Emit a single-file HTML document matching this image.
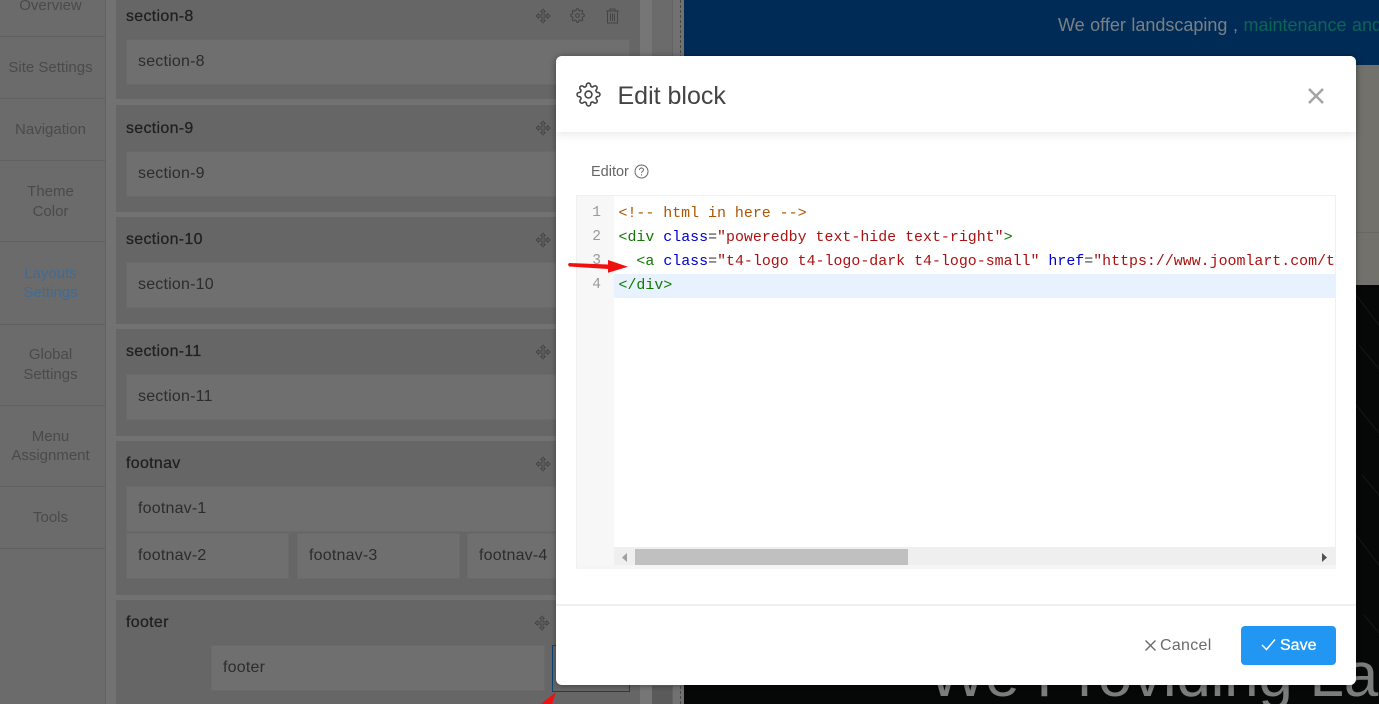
<!DOCTYPE html>
<html><head><meta charset="utf-8"><title>Edit block</title>
<style>
html,body{margin:0;padding:0;width:1379px;height:704px;overflow:hidden;background:#727272}
*{box-sizing:border-box}
body{font-family:"Liberation Sans",sans-serif;position:relative}
.a{position:absolute}
.nav{position:absolute;left:0;width:105px;border-bottom:1px solid #616161;color:#4a4a4a;font-size:15px;line-height:20px;text-align:center}
.nav span{position:absolute;left:0;width:101px}
.sec{position:absolute;left:116px;width:524px;background:#666}
.t{position:absolute;left:126px;color:#202020;font-size:16px;line-height:20px;letter-spacing:.3px;-webkit-text-stroke:.25px #202020}
.b{position:absolute;background:#6f6f6f;border:1px solid #6a6a6a;color:#2c2c2c;font-size:16px;line-height:44px;padding-left:11px;letter-spacing:.2px;height:46px}
.code{position:absolute;left:618px;font:14.93px/24px "Liberation Mono",monospace;white-space:pre;color:#222}
.n{position:absolute;left:577px;width:24px;text-align:right;font:14.5px/24px "Liberation Mono",monospace;color:#999}
.tg{color:#170}.at{color:#00c}.st{color:#a11}.cm{color:#a50}.eq{color:#444}
</style></head><body>

<!-- right page -->
<div class="a" style="left:684px;top:0;width:695px;height:65px;background:#002b56"></div>
<div class="a" style="left:684px;top:65px;width:695px;height:220px;background:#72716c"></div>
<div class="a" style="left:684px;top:232px;width:695px;height:1px;background:#686762"></div>
<div class="a" style="left:684px;top:285px;width:695px;height:419px;background:#060808;overflow:hidden">
<svg width="695" height="419" style="position:absolute;left:0;top:0"><g stroke="#161818" stroke-width="1"><path d="M672 10l23 30M675 60l20 24M672 120l23 28M678 190l17 20M672 250l23 30M680 330l15 18"/></g></svg>
<div class="a" style="left:244px;top:356px;font-size:62px;line-height:70px;color:#7c7c7c;white-space:nowrap;letter-spacing:-.25px">We Providing Lan</div>
</div>
<div class="a" style="left:1058px;top:13px;font-size:18px;line-height:24px;color:#7a8185;white-space:nowrap;word-spacing:.5px"><span>We offer landscaping ,</span> <span style="color:#0a6555">maintenance and</span></div>

<!-- strips -->
<div class="a" style="left:640px;top:0;width:12px;height:704px;background:#767676"></div>
<div class="a" style="left:652px;top:0;width:20px;height:704px;background:#6b6b6b"></div>
<div class="a" style="left:652px;top:686px;width:20px;height:18px;background:#5a5a5a"></div>
<div class="a" style="left:672px;top:0;width:1px;height:704px;background:#636363"></div>
<div class="a" style="left:673px;top:0;width:11px;height:704px;background:#717171"></div>
<div class="a" style="left:680px;top:0;width:0;height:704px;border-left:1px dashed #484848"></div>

<!-- sidebar -->
<div class="a" style="left:0;top:0;width:106px;height:704px;background:#6b6b6b;border-right:1px solid #616161"></div>
<div class="nav" style="top:-20px;height:57px"><span style="top:16px">Overview</span></div>
<div class="nav" style="top:37px;height:62px"><span style="top:21px">Site Settings</span></div>
<div class="nav" style="top:99px;height:62px"><span style="top:21px">Navigation</span></div>
<div class="nav" style="top:161px;height:81px"><span style="top:21px">Theme<br>Color</span></div>
<div class="nav" style="top:242px;height:83px;color:#416b93;line-height:19px"><span style="top:22px">Layouts<br>Settings</span></div>
<div class="nav" style="top:325px;height:81px"><span style="top:20px">Global<br>Settings</span></div>
<div class="nav" style="top:406px;height:81px;line-height:19px"><span style="top:21px">Menu<br>Assignment</span></div>
<div class="nav" style="top:487px;height:62px"><span style="top:21px">Tools</span></div>

<!-- sections -->
<div class="sec" style="top:-10px;height:109px"></div>
<div class="sec" style="top:105px;height:107px"></div>
<div class="sec" style="top:217px;height:107px"></div>
<div class="sec" style="top:329px;height:107px"></div>
<div class="sec" style="top:441px;height:154px"></div>
<div class="sec" style="top:600px;height:104px"></div>

<div class="t" style="top:7px">section-8</div>
<div class="t" style="top:119px">section-9</div>
<div class="t" style="top:230px">section-10</div>
<div class="t" style="top:342px">section-11</div>
<div class="t" style="top:454px">footnav</div>
<div class="t" style="top:613px">footer</div>

<div class="b" style="left:126px;top:39px;width:504px">section-8</div>
<div class="b" style="left:126px;top:151px;width:504px">section-9</div>
<div class="b" style="left:126px;top:262px;width:504px">section-10</div>
<div class="b" style="left:126px;top:374px;width:504px">section-11</div>
<div class="b" style="left:126px;top:486px;width:504px">footnav-1</div>
<div class="b" style="left:126px;top:533px;width:163px">footnav-2</div>
<div class="b" style="left:297px;top:533px;width:163px">footnav-3</div>
<div class="b" style="left:467px;top:533px;width:163px">footnav-4</div>
<div class="b" style="left:211px;top:645px;width:334px">footer</div>
<div class="a" style="left:552px;top:645px;width:78px;height:47px;border:1px solid #0c4476"></div>

<!-- move icons -->
<svg class="a" style="left:535px;top:8px" width="16" height="16" viewBox="0 0 16 16" fill="none" stroke="#444" stroke-width=".9"><path d="M8 1l2.200 2.500H9V7h3.500V5.800L15 8l-2.500 2.200V9H9v3.500h1.200L8 15l-2.200-2.500H7V9H3.500v1.200L1 8l2.500-2.200V7H7V3.500H5.800z"/></svg>
<svg class="a" style="left:535px;top:120px" width="16" height="16" viewBox="0 0 16 16" fill="none" stroke="#444" stroke-width=".9"><path d="M8 1l2.200 2.500H9V7h3.500V5.800L15 8l-2.500 2.200V9H9v3.500h1.200L8 15l-2.200-2.500H7V9H3.500v1.200L1 8l2.500-2.200V7H7V3.500H5.800z"/></svg>
<svg class="a" style="left:535px;top:232px" width="16" height="16" viewBox="0 0 16 16" fill="none" stroke="#444" stroke-width=".9"><path d="M8 1l2.200 2.500H9V7h3.500V5.800L15 8l-2.500 2.200V9H9v3.500h1.200L8 15l-2.200-2.500H7V9H3.500v1.200L1 8l2.500-2.200V7H7V3.500H5.800z"/></svg>
<svg class="a" style="left:535px;top:344px" width="16" height="16" viewBox="0 0 16 16" fill="none" stroke="#444" stroke-width=".9"><path d="M8 1l2.200 2.500H9V7h3.500V5.800L15 8l-2.500 2.200V9H9v3.500h1.200L8 15l-2.200-2.500H7V9H3.500v1.200L1 8l2.500-2.200V7H7V3.500H5.800z"/></svg>
<svg class="a" style="left:535px;top:456px" width="16" height="16" viewBox="0 0 16 16" fill="none" stroke="#444" stroke-width=".9"><path d="M8 1l2.200 2.500H9V7h3.500V5.800L15 8l-2.500 2.200V9H9v3.500h1.200L8 15l-2.200-2.500H7V9H3.500v1.200L1 8l2.500-2.200V7H7V3.500H5.800z"/></svg>
<svg class="a" style="left:534px;top:615px" width="16" height="16" viewBox="0 0 16 16" fill="none" stroke="#444" stroke-width=".9"><path d="M8 1l2.200 2.500H9V7h3.500V5.800L15 8l-2.500 2.200V9H9v3.500h1.200L8 15l-2.200-2.500H7V9H3.500v1.200L1 8l2.500-2.200V7H7V3.500H5.800z"/></svg>

<svg class="a" style="left:570px;top:8px" width="15" height="15" viewBox="0 0 24 24" fill="none" stroke="#444" stroke-width="1.700"><circle cx="12" cy="12" r="3"/><path d="M19.4 15a1.65 1.65 0 0 0 .33 1.82l.06.06a2 2 0 0 1 0 2.83 2 2 0 0 1-2.83 0l-.06-.06a1.65 1.65 0 0 0-1.82-.33 1.65 1.65 0 0 0-1 1.51V21a2 2 0 0 1-2 2 2 2 0 0 1-2-2v-.09A1.65 1.65 0 0 0 9 19.4a1.65 1.65 0 0 0-1.82.33l-.06.06a2 2 0 0 1-2.83 0 2 2 0 0 1 0-2.83l.06-.06a1.65 1.65 0 0 0 .33-1.82 1.65 1.65 0 0 0-1.51-1H3a2 2 0 0 1-2-2 2 2 0 0 1 2-2h.09A1.65 1.65 0 0 0 4.600 9a1.65 1.65 0 0 0-.33-1.82l-.06-.06a2 2 0 0 1 0-2.83 2 2 0 0 1 2.83 0l.06.06a1.65 1.65 0 0 0 1.82.33H9a1.65 1.65 0 0 0 1-1.51V3a2 2 0 0 1 2-2 2 2 0 0 1 2 2v.09a1.65 1.65 0 0 0 1 1.51 1.65 1.65 0 0 0 1.82-.33l.06-.06a2 2 0 0 1 2.83 0 2 2 0 0 1 0 2.83l-.06.06a1.65 1.65 0 0 0-.33 1.82V9a1.65 1.65 0 0 0 1.51 1H21a2 2 0 0 1 2 2 2 2 0 0 1-2 2h-.09a1.65 1.65 0 0 0-1.51 1z"/></svg>
<svg class="a" style="left:605px;top:8px" width="15" height="16" viewBox="0 0 15 16" fill="none" stroke="#444"><path d="M1 3h13M5 3V1h5v2M2.500 3v12h10V3M5.500 5.500v7.500M7.500 5.500v7.500M9.500 5.500v7.500"/></svg>

<!-- modal -->
<div class="a" style="left:556px;top:56px;width:800px;height:629px;background:#fff;border-radius:6px;box-shadow:0 1px 6px rgba(0,0,0,.35)"></div>
<div class="a" style="left:556px;top:56px;width:800px;height:76px;background:#fff;border-radius:6px 6px 0 0;box-shadow:0 2px 10px rgba(0,0,0,.1)"></div>
<svg class="a" style="left:576px;top:82px" width="25" height="25" viewBox="0 0 24 24" fill="none" stroke="#444" stroke-width="1.500"><circle cx="12" cy="12" r="3.300"/><path d="M19.4 15a1.65 1.65 0 0 0 .33 1.82l.06.06a2 2 0 0 1 0 2.83 2 2 0 0 1-2.83 0l-.06-.06a1.65 1.65 0 0 0-1.82-.33 1.65 1.65 0 0 0-1 1.51V21a2 2 0 0 1-2 2 2 2 0 0 1-2-2v-.09A1.65 1.65 0 0 0 9 19.4a1.65 1.65 0 0 0-1.82.33l-.06.06a2 2 0 0 1-2.83 0 2 2 0 0 1 0-2.83l.06-.06a1.65 1.65 0 0 0 .33-1.82 1.65 1.65 0 0 0-1.51-1H3a2 2 0 0 1-2-2 2 2 0 0 1 2-2h.09A1.65 1.65 0 0 0 4.600 9a1.65 1.65 0 0 0-.33-1.82l-.06-.06a2 2 0 0 1 0-2.83 2 2 0 0 1 2.83 0l.06.06a1.65 1.65 0 0 0 1.82.33H9a1.65 1.65 0 0 0 1-1.51V3a2 2 0 0 1 2-2 2 2 0 0 1 2 2v.09a1.65 1.65 0 0 0 1 1.51 1.65 1.65 0 0 0 1.82-.33l.06-.06a2 2 0 0 1 2.83 0 2 2 0 0 1 0 2.83l-.06.06a1.65 1.65 0 0 0-.33 1.82V9a1.65 1.65 0 0 0 1.51 1H21a2 2 0 0 1 2 2 2 2 0 0 1-2 2h-.09a1.65 1.65 0 0 0-1.51 1z"/></svg>
<div class="a" style="left:617.500px;top:81px;font-size:25px;line-height:30px;color:#444;white-space:nowrap">Edit block</div>
<svg class="a" style="left:1307px;top:87px" width="18" height="18" viewBox="0 0 18 18" stroke="#a3a3a3" stroke-width="2.400"><path d="M2 2l14 14M16 2L2 16"/></svg>

<div class="a" style="left:591px;top:163px;font-size:14.500px;line-height:18px;color:#666">Editor</div>
<svg class="a" style="left:634px;top:164px" width="15" height="15" viewBox="0 0 15 15" fill="none" stroke="#666"><circle cx="7.500" cy="7.500" r="6.500"/><path d="M5.500 6c0-1.300 1-2 2-2s2 .7 2 1.900c0 1.400-2 1.500-2 3"/><path d="M7.500 10.300v1.200"/></svg>

<!-- editor -->
<div class="a" style="left:576px;top:195px;width:760px;height:374px;border:1px solid #f0f0f0;background:#fff"></div>
<div class="a" style="left:577px;top:196px;width:37px;height:372px;background:#f7f7f7"></div>
<div class="a" style="left:614px;top:274px;width:721px;height:24px;background:#e8f2fe"></div>
<div class="n" style="top:201px">1</div>
<div class="n" style="top:225px">2</div>
<div class="n" style="top:249px">3</div>
<div class="n" style="top:273px">4</div>
<div class="a" style="left:614px;top:196px;width:721px;height:110px;overflow:hidden">
<div class="code" style="left:4.500px;top:6px"><span class="cm">&lt;!-- html in here --&gt;</span></div>
<div class="code" style="left:4.500px;top:30px"><span class="tg">&lt;div</span> <span class="at">class</span><span class="eq">=</span><span class="st">"poweredby text-hide text-right"</span><span class="tg">&gt;</span></div>
<div class="code" style="left:4.500px;top:54px">  <span class="tg">&lt;a</span> <span class="at">class</span><span class="eq">=</span><span class="st">"t4-logo t4-logo-dark t4-logo-small"</span> <span class="at">href</span><span class="eq">=</span><span class="st">"https://www.joomlart.com/t4-framework"</span></div>
<div class="code" style="left:4.500px;top:78px"><span class="tg">&lt;/div&gt;</span></div>
</div>
<!-- scrollbar -->
<div class="a" style="left:614px;top:547px;width:722px;height:18px;background:#efefef"></div>
<div class="a" style="left:577px;top:565px;width:759px;height:4px;background:#f5f5f5"></div>
<div class="a" style="left:635px;top:549px;width:273px;height:16px;background:#c0c0c0"></div>
<svg class="a" style="left:622px;top:553px" width="6" height="9"><path d="M5 0v9L0 4.500z" fill="#a0a0a0"/></svg>
<svg class="a" style="left:1322px;top:553px" width="6" height="9"><path d="M0 0v9l5-4.500z" fill="#505050"/></svg>

<!-- footer -->
<div class="a" style="left:556px;top:604px;width:800px;height:2px;background:#efefef"></div>
<svg class="a" style="left:1144px;top:639px" width="13" height="13" viewBox="0 0 13 13" stroke="#666" stroke-width="1.300"><path d="M1.500 1.500l10 10M11.500 1.500l-10 10"/></svg>
<div class="a" style="left:1160px;top:636px;font-size:16px;line-height:19px;color:#6a6a6a;letter-spacing:.3px">Cancel</div>
<div class="a" style="left:1241px;top:626px;width:95px;height:39px;background:#2196f3;border-radius:4px"></div>
<svg class="a" style="left:1261px;top:638px" width="15" height="13" viewBox="0 0 15 13" fill="none" stroke="#fff" stroke-width="1.500"><path d="M1 7l4.500 4.500L14 1.500"/></svg>
<div class="a" style="left:1280px;top:636px;font-size:16px;line-height:19px;color:#fff;-webkit-text-stroke:.3px #fff">Save</div>

<!-- red arrows -->
<svg class="a" style="left:0;top:0" width="1379" height="704"><path d="M568 264.500L569 263 608 264.500 608 260 628 266.700 608 272.700 608 269 569 266.500z" fill="#f01010"/><path d="M556 692L552 704H541z" fill="#f01010"/></svg>
</body></html>
